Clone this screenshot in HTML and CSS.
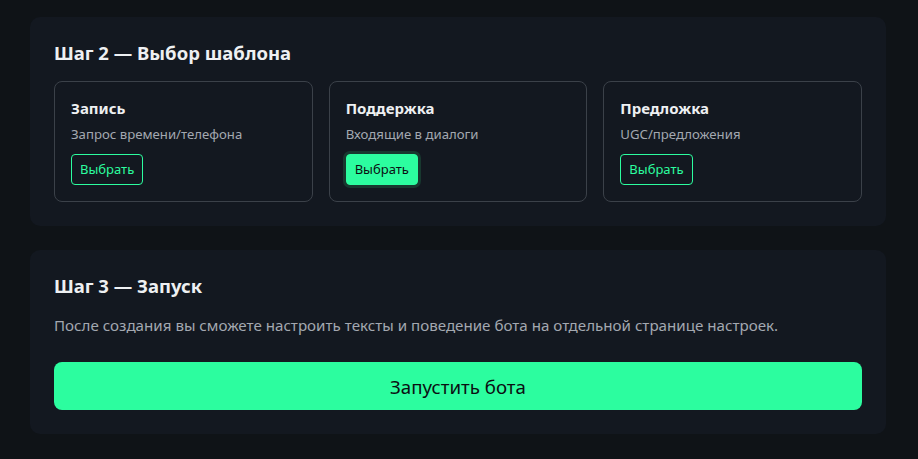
FILE: index.html
```html
<!DOCTYPE html>
<html lang="ru">
<head>
<meta charset="utf-8">
<link rel="stylesheet" href="styles.css">
</head>
<body>
<main class="page">
  <section class="panel">
    <h2 class="panel-title">Шаг 2 — Выбор шаблона</h2>
    <div class="cards">
      <div class="card">
        <div class="card-title">Запись</div>
        <div class="card-sub">Запрос времени/телефона</div>
        <button class="btn-outline">Выбрать</button>
      </div>
      <div class="card">
        <div class="card-title">Поддержка</div>
        <div class="card-sub">Входящие в диалоги</div>
        <button class="btn-outline btn-active">Выбрать</button>
      </div>
      <div class="card">
        <div class="card-title">Предложка</div>
        <div class="card-sub">UGC/предложения</div>
        <button class="btn-outline">Выбрать</button>
      </div>
    </div>
  </section>
  <section class="panel">
    <h2 class="panel-title">Шаг 3 — Запуск</h2>
    <p class="panel-text">После создания вы сможете настроить тексты и поведение бота на отдельной странице настроек.</p>
    <button class="btn-primary">Запустить бота</button>
  </section>
</main>
</body>
</html>
```
FILE: styles.css
```css
html, body {
  margin: 0;
  padding: 0;
  background: #0f1317;
}
body {
  font-family: "Segoe UI", "Noto Sans", "Open Sans", sans-serif;
  color: #e8eaed;
}
.page {
  padding: 17px 32px 20px 30px;
  display: flex;
  flex-direction: column;
  gap: 24px;
}
.panel {
  background: #131820;
  border-radius: 10px;
  padding: 24px 24px 24px 24px;
}
.panel-title {
  margin: 0;
  font-size: 18.5px;
  line-height: 24px;
  font-weight: 700;
  color: #eef0f2;
}
.cards {
  margin-top: 16px;
  display: grid;
  grid-template-columns: repeat(3, 1fr);
  gap: 16px;
}
.card {
  border: 1px solid #3b4149;
  border-radius: 8px;
  padding: 16px 16px 16px;
}
.card-title {
  font-size: 15px;
  line-height: 20px;
  font-weight: 700;
  color: #eef0f2;
}
.card-sub {
  margin-top: 6px;
  font-size: 13.2px;
  line-height: 20px;
  color: #a3a8b0;
}
.btn-outline {
  margin-top: 10px;
  font-family: inherit;
  font-size: 13px;
  line-height: 17px;
  padding: 6px 8px;
  border: 1px solid #2cfd9f;
  border-radius: 4px;
  background: transparent;
  color: #2cfd9f;
  cursor: pointer;
}
.btn-active {
  background: #2cfd9f;
  color: #0b0f12;
  box-shadow: 0 0 0 3px #18382f;
}
.panel-text {
  margin: 16px 0 26px;
  font-size: 15.15px;
  line-height: 22px;
  color: #a3a8b0;
}
.btn-primary {
  display: block;
  width: 100%;
  height: 48px;
  font-family: inherit;
  font-size: 18.7px;
  border: none;
  border-radius: 8px;
  background: #2cfd9f;
  color: #0b0f12;
  cursor: pointer;
}
```
